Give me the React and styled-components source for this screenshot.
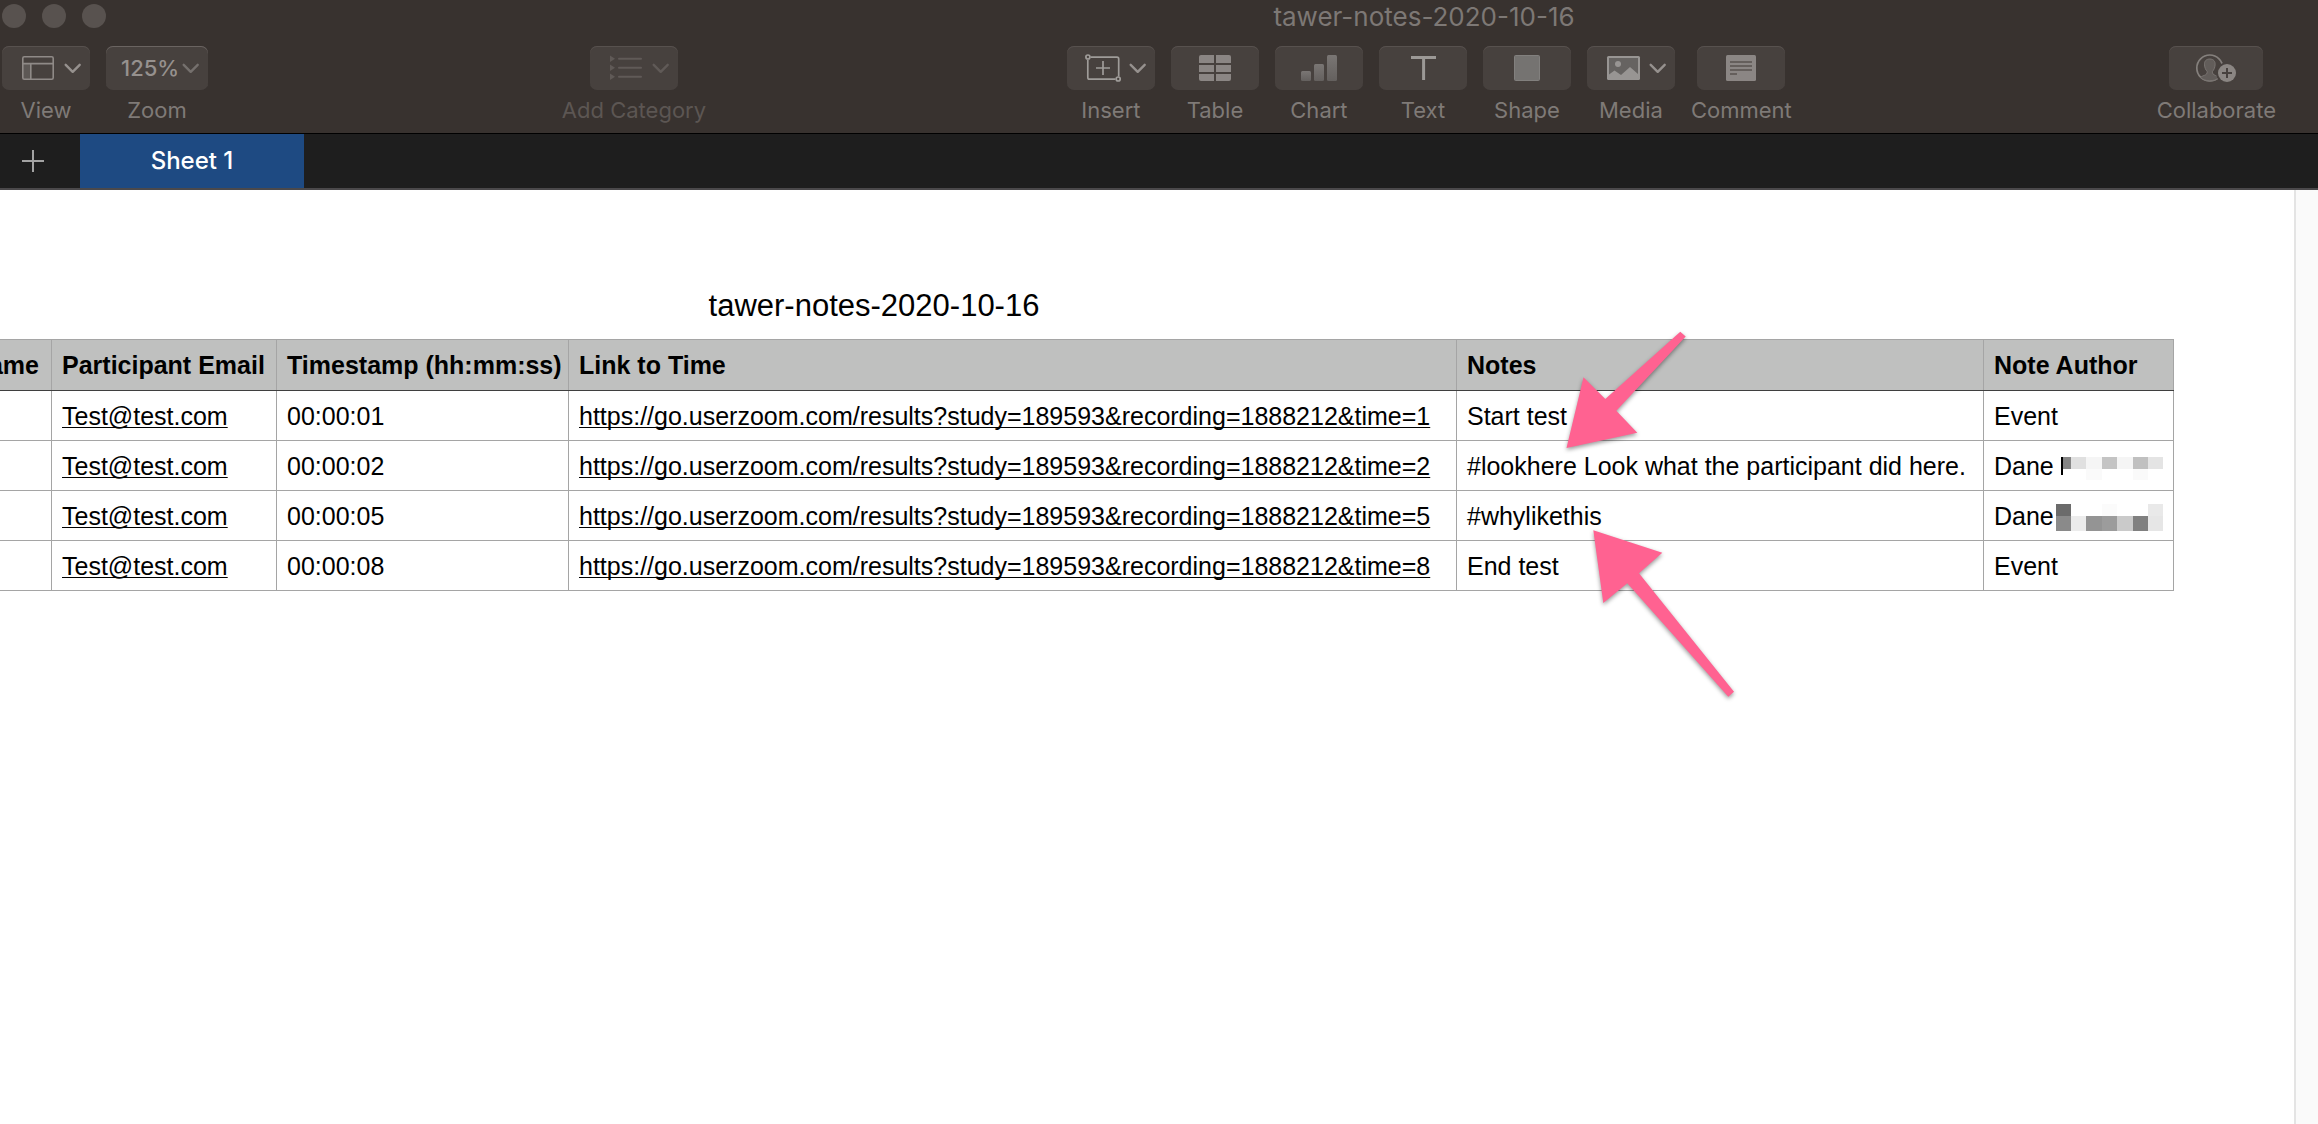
import React, { useState } from "react";
import styled, { createGlobalStyle } from "styled-components";

const GlobalStyle = createGlobalStyle`
  * {
    box-sizing: border-box;
  }
  body {
    margin: 0;
    background: #fff;
    font-family: Inter, "Liberation Sans", sans-serif;
  }
`;

const Window = styled.div`
  display: flex;
  flex-direction: column;
  min-height: 100vh;
  overflow: hidden;
`;

const Chrome = styled.header`
  background: #38322f;
  border-bottom: 1px solid #000;
`;

const TitleBar = styled.div`
  display: flex;
  align-items: center;
  height: 34px;
  padding-left: 2px;
`;

const Lights = styled.div`
  display: flex;
  gap: 16px;
`;

const Light = styled.span`
  width: 24px;
  height: 24px;
  margin-bottom: 2px;
  border-radius: 50%;
  background: #58524f;
`;

const WindowTitle = styled.h1`
  flex: 1;
  margin: 0;
  padding-left: 424px;
  color: #7d7875;
  font-size: 26px;
  font-weight: 400;
  line-height: 34px;
  text-align: center;
  white-space: nowrap;
`;

const Toolbar = styled.div`
  display: flex;
  align-items: flex-start;
  padding: 12px 42px 8px 2px;
`;

const Group = styled.div`
  display: flex;
  gap: 16px;
`;

const Spacer = styled.div`
  flex: ${({ $grow }) => $grow} 0 0;
`;

const Tool = styled.button`
  display: flex;
  flex-direction: column;
  align-items: center;
  gap: 5px;
  padding: 0;
  border: 0;
  background: none;
  color: ${({ disabled }) => (disabled ? "#5c5653" : "#7f7a77")};
  font: inherit;
`;

const Face = styled.span`
  display: block;
  width: ${({ $wide }) => ($wide ? "94px" : "88px")};
  height: 44px;
  border-radius: 7px;
  background: #47413e;
  box-shadow: inset 0 1px 0 #57514e;

  svg {
    display: block;
    margin: 0 auto;
  }
`;

const ToolLabel = styled.span`
  font-size: 22px;
  line-height: 30px;
  white-space: nowrap;
`;

const ZoomField = styled.label`
  display: flex;
  flex-direction: column;
  align-items: center;
  gap: 5px;
  color: #7f7a77;
`;

const SelectBox = styled.span`
  position: relative;
  display: block;

  svg {
    position: absolute;
    top: 0;
    right: 0;
    pointer-events: none;
  }
`;

const ZoomSelect = styled.select`
  display: block;
  width: 102px;
  height: 44px;
  padding: 0 0 0 15px;
  appearance: none;
  border: 0;
  border-radius: 7px;
  background: #47413e;
  box-shadow: inset 0 1px 0 #6a6461;
  color: #96918e;
  font-family: inherit;
  font-size: 22px;
  font-weight: 500;
`;

const TabBar = styled.nav`
  display: flex;
  height: 56px;
  border-bottom: 2px solid #4b494b;
  background: #1e1e1e;
`;

const AddSheet = styled.button`
  width: 80px;
  padding: 0 14px 0 0;
  border: 0;
  background: none;

  svg {
    display: block;
    margin: 0 auto;
  }
`;

const SheetTab = styled.button`
  width: 224px;
  padding: 0 0 2px;
  border: 0;
  background: #1e4a82;
  color: #fff;
  font-family: inherit;
  font-size: 24px;
  font-weight: 500;
`;

const Workspace = styled.main`
  flex: 1;
  display: flex;
`;

const Canvas = styled.div`
  flex: 1;
  min-width: 0;
  display: flex;
  justify-content: flex-end;
  align-items: flex-start;
  padding: 96px 120px 0 0;
  overflow: hidden;
`;

const ScrollGutter = styled.div`
  width: 24px;
  border-left: 2px solid #e4e4e4;
  background: #fafafa;
`;

const Sheet = styled.section`
  flex: none;
  width: 2600px;
  color: #000;
  font-family: "Liberation Sans", Arial, sans-serif;
`;

const SheetTitle = styled.h2`
  margin: 0 0 13px;
  font-size: 31px;
  font-weight: 400;
  line-height: 40px;
  text-align: center;
`;

const TableWrap = styled.div`
  position: relative;
`;

const Table = styled.table`
  width: 100%;
  table-layout: fixed;
  border-collapse: collapse;
  font-size: 25px;
  line-height: 30px;
`;

const Col = styled.col`
  width: ${({ $width }) => $width}px;
`;

const HeadCell = styled.th`
  height: 51px;
  padding: 0 12px 0 10px;
  border: 1px solid #a5a5a5;
  border-bottom-color: #3f3f3f;
  background: #bfc0bf;
  text-align: ${({ $end }) => ($end ? "right" : "left")};
  white-space: nowrap;
`;

const Cell = styled.td`
  height: 50px;
  padding: 1px 0 0 10px;
  border: 1px solid #a5a5a5;
  border-top: 0;
  white-space: nowrap;
`;

const CellLink = styled.a`
  color: inherit;
  text-decoration: underline;
  text-decoration-thickness: 1px;
  text-underline-offset: 2px;
  text-decoration-skip-ink: none;
`;

const Mosaic = styled.svg`
  margin-left: 2px;
  vertical-align: -6px;
`;

const Arrows = styled.svg`
  position: absolute;
  top: -14px;
  right: 434px;
  filter: drop-shadow(0 2px 2px rgba(0, 0, 0, 0.4));
  pointer-events: none;
`;

const Icon = ({ width = 88, children }) => (
  <svg
    width={width}
    height="44"
    viewBox={`0 0 ${width} 44`}
    fill="none"
    aria-hidden="true"
  >
    {children}
  </svg>
);

const Chevron = ({ x = 63.7, color = "#96918e" }) => (
  <path
    d={`M${x} 18.8l7 7 7-7`}
    stroke={color}
    strokeWidth="2.4"
    strokeLinecap="round"
    strokeLinejoin="round"
  />
);

const ViewIcon = () => (
  <Icon>
    <path d="M21 18h8v15h-8z" fill="#5d5855" />
    <rect x="20.8" y="10.8" width="30.4" height="22.4" rx="1.5" stroke="#8f8a87" strokeWidth="1.6" />
    <path d="M21 17.6h30M28.8 17.6V33" stroke="#8f8a87" strokeWidth="1.6" />
    <Chevron />
  </Icon>
);

const CategoryIcon = () => (
  <Icon>
    {[12.8, 21.8, 30.8].map((y) => (
      <React.Fragment key={y}>
        <path d={`M20 ${y - 3.2}l5 3.2-5 3.2z`} fill="#605a57" />
        <path d={`M29 ${y}h22`} stroke="#605a57" strokeWidth="2" strokeLinecap="round" />
      </React.Fragment>
    ))}
    <Chevron color="#605a57" />
  </Icon>
);

const InsertIcon = () => (
  <Icon>
    <g stroke="#9f9c99" strokeWidth="1.7">
      <path d="M23.5 11.2H50a1.7 1.7 0 0 1 1.7 1.7V30.5M48.5 33.2H22.5a1.7 1.7 0 0 1-1.7-1.7V13.8" />
      <circle cx="20.9" cy="11" r="2" />
      <circle cx="51.2" cy="33" r="2" />
      <path d="M29 22h14M36 15v14" />
    </g>
    <Chevron />
  </Icon>
);

const TableIcon = () => (
  <Icon>
    <clipPath id="grid-clip">
      <rect x="28" y="9" width="32" height="26" rx="2" />
    </clipPath>
    <g clipPath="url(#grid-clip)" fill="#8b8684">
      <path d="M28 9h15v8H28zM45 9h15v8H45zM28 19h15v7H28zM45 19h15v7H45zM28 28h15v7H28zM45 28h15v7H45z" />
    </g>
  </Icon>
);

const ChartIcon = () => (
  <Icon>
    <linearGradient id="bars" x1="0" y1="0" x2="0" y2="1">
      <stop stopColor="#7a7674" />
      <stop offset="1" stopColor="#64605e" />
    </linearGradient>
    <g fill="url(#bars)">
      <rect x="26" y="25" width="10" height="10" rx="1.5" />
      <rect x="39" y="18" width="10" height="17" rx="1.5" />
      <rect x="52" y="9" width="10" height="26" rx="1.5" />
    </g>
  </Icon>
);

const TextIcon = () => (
  <Icon>
    <path d="M32 11.5h25M44.6 11.5V34" stroke="#9c9996" strokeWidth="3" />
  </Icon>
);

const ShapeIcon = () => (
  <Icon>
    <rect x="31.5" y="9.5" width="25" height="25" rx="1" fill="#757371" stroke="#82807e" />
  </Icon>
);

const MediaIcon = () => (
  <Icon>
    <rect x="20" y="10" width="33" height="24" rx="1.5" fill="#989593" />
    <path d="M22 12h29v16l-8-7-9 8-6.5-4.5-5.5 4z" fill="#666361" />
    <circle cx="31" cy="18" r="3" fill="#989593" />
    <Chevron />
  </Icon>
);

const CommentIcon = () => (
  <Icon>
    <rect x="29" y="9" width="30" height="26" rx="1.5" fill="#8b8684" />
    <path d="M33 16h22M33 20h22M33 24h22M33 28h7" stroke="#59534f" strokeWidth="1.7" />
  </Icon>
);

const CollaborateIcon = () => (
  <Icon width={94}>
    <circle cx="40.8" cy="22" r="13" fill="#47413e" stroke="#85807d" strokeWidth="1.7" />
    <path
      d="M40.8 13c-3.8 0-5.6 2.4-5.3 5.8.2 3 1.3 5.2 2.6 6.5.3 2.3-.6 3.3-2.8 4.1-1.8.6-3 1.2-3.7 2.1 2.4 2.3 5.6 3.3 9.2 3.3s6.8-1 9.2-3.3c-.7-.9-1.9-1.5-3.7-2.1-2.2-.8-3.1-1.8-2.8-4.1 1.3-1.3 2.4-3.5 2.6-6.5.3-3.4-1.5-5.8-5.3-5.8z"
      fill="#625d5a"
      stroke="#7a7572"
    />
    <circle cx="58" cy="27" r="10.8" fill="#47413e" />
    <circle cx="58" cy="27" r="9" fill="#8b8683" />
    <path d="M53 27h10M58 22v10" stroke="#47413e" strokeWidth="2" />
  </Icon>
);

const ToolItem = ({ label, icon: ToolIcon, wide, disabled }) => (
  <Tool type="button" disabled={disabled}>
    <Face $wide={wide}>
      <ToolIcon />
    </Face>
    <ToolLabel>{label}</ToolLabel>
  </Tool>
);

const insertTools = [
  { label: "Insert", icon: InsertIcon },
  { label: "Table", icon: TableIcon },
  { label: "Chart", icon: ChartIcon },
  { label: "Text", icon: TextIcon },
  { label: "Shape", icon: ShapeIcon },
  { label: "Media", icon: MediaIcon },
  { label: "Comment", icon: CommentIcon },
];

const columns = [
  { title: "Participant Name", width: 477, end: true },
  { title: "Participant Email", width: 225 },
  { title: "Timestamp (hh:mm:ss)", width: 292 },
  { title: "Link to Time", width: 888 },
  { title: "Notes", width: 527 },
  { title: "Note Author", width: 190 },
];

// [x, y, width, height, colour]
const blurredNames = {
  light: [
    [5, 3, 2, 18, "#000"],
    [7, 3, 8, 12, "#858585"],
    [15, 3, 15, 12, "#e0e0e0"],
    [30, 3, 16, 12, "#f5f5f5"],
    [46, 3, 15, 12, "#c4c4c4"],
    [61, 3, 16, 12, "#f5f5f5"],
    [77, 3, 15, 12, "#c0c0c0"],
    [92, 3, 15, 12, "#e4e4e4"],
    [30, 15, 16, 11, "#fafafa"],
    [77, 15, 15, 11, "#fafafa"],
  ],
  dark: [
    [0, 0, 15, 12, "#6b6b6b"],
    [46, 0, 15, 12, "#fbfbfb"],
    [92, 0, 15, 12, "#e9e9e9"],
    [0, 12, 15, 15, "#8a8a8a"],
    [15, 12, 15, 15, "#ececec"],
    [30, 12, 16, 15, "#949494"],
    [46, 12, 15, 15, "#9c9c9c"],
    [61, 12, 16, 15, "#cacaca"],
    [77, 12, 15, 15, "#808080"],
    [92, 12, 15, 15, "#e6e6e6"],
  ],
};

const rows = [
  { second: 1, note: "Start test", author: "Event" },
  {
    second: 2,
    note: "#lookhere Look what the participant did here.",
    author: "Dane",
    blurred: "light",
  },
  { second: 5, note: "#whylikethis", author: "Dane", blurred: "dark" },
  { second: 8, note: "End test", author: "Event" },
];

const BlurredName = ({ variant }) => (
  <Mosaic width="107" height="27" shapeRendering="crispEdges" aria-hidden="true">
    {blurredNames[variant].map(([x, y, width, height, fill]) => (
      <rect key={`${x}-${y}`} x={x} y={y} width={width} height={height} fill={fill} />
    ))}
  </Mosaic>
);

const NotesTable = () => (
  <Table>
    <colgroup>
      {columns.map(({ title, width }) => (
        <Col key={title} $width={width} />
      ))}
    </colgroup>
    <thead>
      <tr>
        {columns.map(({ title, end }) => (
          <HeadCell key={title} scope="col" $end={end}>
            {title}
          </HeadCell>
        ))}
      </tr>
    </thead>
    <tbody>
      {rows.map(({ second, note, author, blurred }) => {
        const url = `https://go.userzoom.com/results?study=189593&recording=1888212&time=${second}`;
        return (
          <tr key={second}>
            <Cell />
            <Cell>
              <CellLink href="mailto:Test@test.com">Test@test.com</CellLink>
            </Cell>
            <Cell>00:00:0{second}</Cell>
            <Cell>
              <CellLink href={url}>{url}</CellLink>
            </Cell>
            <Cell>{note}</Cell>
            <Cell>
              {author}
              {blurred && <BlurredName variant={blurred} />}
            </Cell>
          </tr>
        );
      })}
    </tbody>
  </Table>
);

const App = () => {
  const [zoom, setZoom] = useState("125%");

  return (
    <Window>
      <GlobalStyle />
      <Chrome>
        <TitleBar>
          <Lights>
            <Light />
            <Light />
            <Light />
          </Lights>
          <WindowTitle>tawer-notes-2020-10-16</WindowTitle>
        </TitleBar>
        <Toolbar>
          <Group>
            <ToolItem label="View" icon={ViewIcon} />
            <ZoomField>
              <SelectBox>
                <ZoomSelect value={zoom} onChange={(e) => setZoom(e.target.value)}>
                  <option>100%</option>
                  <option>125%</option>
                  <option>150%</option>
                </ZoomSelect>
                <Icon>
                  <Chevron color="#75706d" />
                </Icon>
              </SelectBox>
              <ToolLabel>Zoom</ToolLabel>
            </ZoomField>
          </Group>
          <Spacer $grow={354} />
          <ToolItem label="Add Category" icon={CategoryIcon} disabled />
          <Spacer $grow={361} />
          <Group>
            {insertTools.map((tool) => (
              <ToolItem key={tool.label} {...tool} />
            ))}
          </Group>
          <Spacer $grow={365} />
          <ToolItem label="Collaborate" icon={CollaborateIcon} wide />
        </Toolbar>
      </Chrome>
      <TabBar>
        <AddSheet type="button" aria-label="Add sheet">
          <svg width="22" height="22" viewBox="0 0 22 22" stroke="#a3a3a3" strokeWidth="2">
            <path d="M0 11h22M11 0v22" />
          </svg>
        </AddSheet>
        <SheetTab type="button">Sheet 1</SheetTab>
      </TabBar>
      <Workspace>
        <Canvas>
          <Sheet>
            <SheetTitle>tawer-notes-2020-10-16</SheetTitle>
            <TableWrap>
              <NotesTable />
              <Arrows width="180" height="380" viewBox="1560 325 180 380" fill="#ff6291" aria-hidden="true">
                <path d="M1566.5 448l17-70.8 21.8 21.8 75-67.3 5.4 4.7-69.4 74.3 21 22z" />
                <path d="M1593.3 530.3l69 22.4-23.3 20.6 95 118.4-5.7 5-101-113.4-24 19.7z" />
              </Arrows>
            </TableWrap>
          </Sheet>
        </Canvas>
        <ScrollGutter />
      </Workspace>
    </Window>
  );
};

export default App;
